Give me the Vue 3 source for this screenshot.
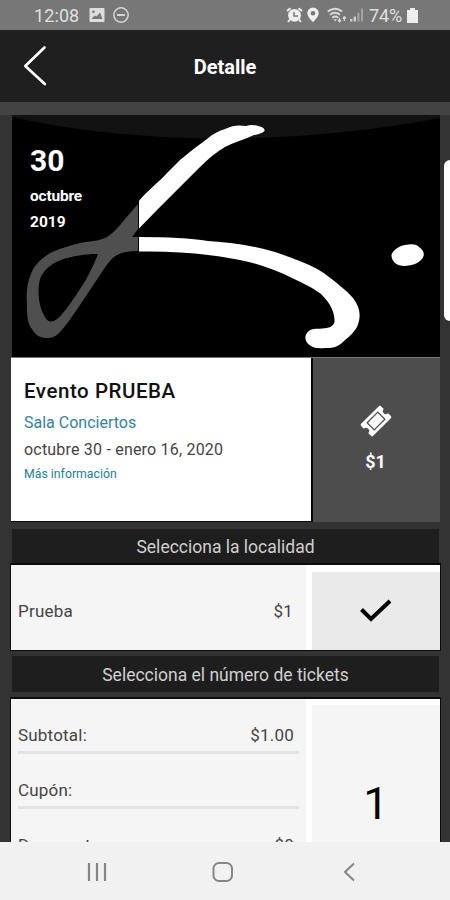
<script setup>
import { ref } from 'vue'

const event = {
  day: '30',
  month: 'octubre',
  year: '2019',
  name: 'Evento PRUEBA',
  venue: 'Sala Conciertos',
  dates: 'octubre 30 - enero 16, 2020',
  price: '$1',
}
const quantity = ref(1)
const lines = [
  { label: 'Subtotal:', value: '$1.00' },
  { label: 'Cupón:', value: '' },
  { label: 'Descuento:', value: '$0' },
]
</script>

<template>
  <div class="screen">
    <div class="status">
      <span class="clock">12:08</span>
      <svg class="status-picture" width="16" height="16" viewBox="0 0 16 16">
        <rect x="0.5" y="1" width="15" height="14" rx="1" fill="#dedede" />
        <path d="M2.500 12l3-3.500 2 1 3.500-4 2.500 6.500z" fill="#777" />
        <circle cx="4.500" cy="4.800" r="1.300" fill="#777" />
      </svg>
      <svg width="16" height="16" viewBox="0 0 16 16" fill="none" stroke="#d6d6d6" stroke-width="1.500">
        <circle cx="8" cy="8" r="7.200" />
        <path d="M4 8h8" stroke-width="2" />
      </svg>
      <span class="spacer"></span>
      <svg width="17" height="16" viewBox="0 0 17 16">
        <path d="M1 4l3.500-2.800M16 4l-3.500-2.800M4 12.500l-2 2.500M13 12.500l2 2.500" stroke="#eee" stroke-width="2" />
        <circle cx="8.500" cy="8.300" r="6.400" fill="#eee" />
        <path d="M8 5v4h4" fill="none" stroke="#777" stroke-width="1.500" />
      </svg>
      <svg class="status-pin" width="12" height="16" viewBox="0 0 12 16">
        <path fill-rule="evenodd" d="M6 .5a5.700 5.700 0 0 0-5.700 5.700c0 3.600 5.700 9 5.700 9s5.700-5.400 5.700-9A5.700 5.700 0 0 0 6 .5zm0 3.400a2.300 2.300 0 1 1 0 4.600 2.300 2.300 0 0 1 0-4.600z" fill="#eee" />
      </svg>
      <svg class="status-wifi" width="20" height="16" viewBox="0 0 20 16" fill="none" stroke="#dadada" stroke-width="1.800">
        <path d="M.8 4.500q7.200-5.500 14.400 0M3 7.700q5-4 10 0M5.300 10.700q3-2.400 5.800 0" />
        <path d="M6.500 12.300h3.500L8.200 14.500z" fill="#dadada" stroke="none" />
        <path d="M12.500 14.500v-3.500m-1.500 2l1.500 1.800L14 13M17.300 14v-4m-1.500 1.500l1.500-1.700 1.500 1.700" stroke-width="1.300" />
      </svg>
      <svg class="status-signal" width="15" height="16" viewBox="0 0 15 16">
        <path d="M1 12h2.400v2.500H1zM4.600 9.500H7v5H4.600z" fill="#ccc" />
        <path d="M8.300 6h2.200v8.500H8.300zM12 1.500h2v13h-2z" fill="#a3a3a3" />
      </svg>
      <span class="charge">74%</span>
      <svg width="11" height="15" viewBox="0 0 11 15">
        <path d="M3 0h5v2h3v13H0V2h3z" fill="#eee" />
      </svg>
    </div>

    <header class="header">
      <svg class="back" width="26" height="42" viewBox="0 0 26 42" fill="none" stroke="#fff" stroke-width="2.700" stroke-linecap="round" stroke-linejoin="round">
        <path d="M21.500 2.500L2.300 21l19.500 18" />
      </svg>
      <h1>Detalle</h1>
      <span class="back"></span>
    </header>

    <main class="content">
      <section class="hero">
        <svg class="artwork" width="428" height="242" viewBox="12 115 428 242">
          <path d="M12 115h428v3Q339 137 233 138.500 108 139 12 117z" fill="#121212" />
          <path fill="#4f4f4f" fill-rule="evenodd" d="M138 204L125 219Q115 232 107 237C100 241 91 241 80 243C68 246 59 249 50 253C41 259 34 265 31 274C27 283 26 293 27 304C27 315 27 323 32 329C36 336 41 338 47 338C53 338 56 336 60 332C68 323 73 315 80 305L100 275C106 266 110 259 117 255Q124 251 138 251V237H132L138 229zM98 254C87 254 71 256 61 260C50 264 43 271 40 279C38 287 38 296 40 305C42 312 46 321 50 321.500C57 322 62 314 67 308Q75 297 82 286Q90 274 98 254z" />
          <path fill="#fff" d="M139 201C147 191 158 183 167 173L180 160Q193 149 207 139C213 134 218 131 225 129C233 125 239 125 246 126Q252 124 258 126C263 127 265 129 264.500 131Q261 134 254 135C244 140 234 142 225 147Q213 154 200 167L180 187L157 210L139 228.500z" />
          <path fill="#fff" d="M139 237Q182 237 208 241Q244 243 275 252Q290 257 302 262Q318 268 329 277C338 284 346 290 353 298C361 308 361 318 357 327Q353 334 345 340C337 348 333 348 325 348Q315 349 311 346C305 343 304 337 307 333C310 328 317 329 322 328.500C329 328 333 327 334.500 322C335 311 329 302 321 294Q312 287 292 278Q274 269 251 262.500Q228 257 208 255Q180 251 139 251.500z" />
          <path fill="#fff" d="M391.500 256C391 252 398 246 405 245Q416 243 419 247C425 251 425 256 421 260Q417 265 405 266C396 266 392 261 391.500 256z" />
        </svg>
        <div class="date">
          <span class="day">{{ event.day }}</span>
          <span class="month">{{ event.month }}</span>
          <span class="year">{{ event.year }}</span>
        </div>
      </section>

      <section class="summary">
        <div class="info">
          <h2>{{ event.name }}</h2>
          <span class="venue">{{ event.venue }}</span>
          <span class="dates">{{ event.dates }}</span>
          <a class="more">Más información</a>
        </div>
        <div class="price">
          <svg width="34" height="34" viewBox="0 0 34 34">
            <g transform="rotate(-45 17 17)">
              <path d="M4.500 8.500H29.500Q31 8.500 31 10V14A3 3 0 0 0 31 20V24Q31 25.500 29.500 25.500H4.500Q3 25.500 3 24V20A3 3 0 0 0 3 14V10Q3 8.500 4.500 8.500z" fill="#fff" />
              <rect x="9.500" y="12" width="15" height="10" fill="#fff" stroke="#4d4d4d" stroke-width="1.300" />
            </g>
          </svg>
          <span>{{ event.price }}</span>
        </div>
      </section>

      <h3 class="bar">Selecciona la localidad</h3>

      <section class="panel location">
        <div class="cell location-info">
          <span>Prueba</span>
          <span>{{ event.price }}</span>
        </div>
        <div class="cell chosen">
          <svg width="34" height="26" viewBox="0 0 34 26" fill="none" stroke="#050505" stroke-width="4">
            <path d="M2.500 11.500l9.500 9.500L31 3" />
          </svg>
        </div>
      </section>

      <h3 class="bar tickets-title">Selecciona el número de tickets</h3>

      <section class="panel tickets">
        <div class="cell lines">
          <div v-for="line in lines" :key="line.label" class="line">
            <span>{{ line.label }}</span>
            <span>{{ line.value }}</span>
          </div>
        </div>
        <div class="cell quantity">{{ quantity }}</div>
      </section>
      <div class="edge-handle"></div>
    </main>

    <nav class="nav">
      <svg width="20" height="20" viewBox="0 0 20 20" stroke="#858585" stroke-width="2.200">
        <path d="M2 1v18M10 1v18M18 1v18" />
      </svg>
      <svg width="22" height="22" viewBox="0 0 22 22" fill="none" stroke="#858585" stroke-width="2">
        <rect x="1.500" y="2" width="18.500" height="18" rx="5.500" />
      </svg>
      <svg width="14" height="20" viewBox="0 0 14 20" fill="none" stroke="#858585" stroke-width="2">
        <path d="M12 1.500L3 10l9 8.500" />
      </svg>
    </nav>
  </div>
</template>

<style>
body {
  margin: 0;
}
</style>

<style scoped>
.screen {
  display: flex;
  flex-direction: column;
  width: 450px;
  height: 900px;
  overflow: hidden;
  background: #333;
  font-family: Roboto, sans-serif;
}
svg {
  display: block;
  flex: none;
}
h1,
h2,
h3 {
  margin: 0;
}
.status {
  display: flex;
  align-items: center;
  flex: none;
  height: 30px;
  box-sizing: border-box;
  padding: 0 32px 0 34px;
  background: #777;
  color: #e0e0e0;
  font-size: 18px;
}
.clock {
  width: 55px;
  letter-spacing: 0.1px;
}
.status-picture {
  margin-right: 8px;
}
.spacer {
  flex: 1;
}
.status-pin {
  margin: 0 8px 0 4px;
}
.status-signal {
  margin: 0 5px 0 2px;
}
.charge {
  width: 38px;
  font-size: 18px;
  letter-spacing: -0.1px;
}
.header {
  display: flex;
  align-items: center;
  justify-content: space-between;
  flex: none;
  height: 72px;
  box-sizing: border-box;
  padding: 0 23px;
  background: #1f1f1f;
  color: #fff;
}
.back {
  width: 26px;
}
.header h1 {
  font-size: 20px;
  font-weight: 700;
  padding-top: 1px;
}
.content {
  position: relative;
  flex: 1;
  min-height: 0;
  overflow: hidden;
  border-top: 13px solid #434343;
  padding: 0 10px 0 12px;
}
.hero {
  position: relative;
  height: 242px;
  background: #000;
}
.date {
  position: absolute;
  left: 18px;
  top: 27px;
  display: flex;
  flex-direction: column;
  color: #fff;
  font-weight: 700;
}
.day {
  font-size: 30px;
  line-height: 38px;
}
.month {
  margin-top: 3px;
  font-size: 15.500px;
  line-height: 26px;
  letter-spacing: -0.2px;
}
.year {
  font-size: 15.500px;
  line-height: 26px;
}
.summary {
  display: flex;
  height: 164px;
  margin-left: -1px;
  border-top: 1px solid #777;
}
.info {
  display: flex;
  flex-direction: column;
  flex: none;
  width: 302px;
  box-sizing: border-box;
  padding: 19px 13px;
  background: #fff;
  border-right: 2px solid #080808;
  border-bottom: 1px solid #080808;
  color: #444;
}
.info h2 {
  font-size: 20.500px;
  font-weight: 500;
  letter-spacing: 0.55px;
  line-height: 28px;
  color: #111;
}
.venue {
  margin-top: 4px;
  font-size: 16px;
  line-height: 27px;
  color: #33829b;
}
.dates {
  font-size: 16px;
  line-height: 27px;
  letter-spacing: 0.2px;
}
.more {
  font-size: 12.300px;
  line-height: 23px;
  color: #238097;
}
.price {
  display: flex;
  flex: 1;
  flex-direction: column;
  align-items: center;
  gap: 13px;
  box-sizing: border-box;
  padding: 46px 2px 0 0;
  background: #4d4d4d;
  color: #fff;
  font-size: 18px;
  font-weight: 700;
}
.bar {
  height: 34px;
  margin: 7px 1px 0 0;
  background: #1e1e1e;
  color: #d0d0d0;
  font-size: 17.500px;
  font-weight: 400;
  line-height: 37px;
  text-align: center;
}
.panel {
  display: flex;
  gap: 6px;
  margin: 0 -1px 0 -2px;
  border: 1px solid #0b0b0b;
  border-top-width: 2px;
  box-sizing: border-box;
  background: #fff;
  color: #444;
}
.location {
  height: 88px;
}
.cell {
  box-sizing: border-box;
  background: #f5f5f5;
}
.location-info {
  display: flex;
  align-items: center;
  justify-content: space-between;
  width: 295px;
  padding: 7px 13px 0 7px;
  font-size: 17px;
  letter-spacing: 0.2px;
}
.chosen {
  display: flex;
  flex: 1;
  justify-content: center;
  margin-top: 7px;
  padding-top: 26px;
  background: #eaeaea;
}
.tickets-title {
  height: 36px;
  margin-top: 5px;
  line-height: 38px;
}
.tickets {
  height: 180px;
  margin-top: 5px;
}
.lines {
  width: 295px;
  padding: 0 7px;
  font-size: 17px;
  letter-spacing: 0.2px;
}
.line {
  display: flex;
  justify-content: space-between;
  align-items: flex-end;
  height: 55px;
  box-sizing: border-box;
  padding: 0 5px 6px 0;
  border-bottom: 3px solid #e3e3e3;
  line-height: 20px;
}
.quantity {
  flex: 1;
  margin-top: 6px;
  padding: 69px 0 0;
  color: #050505;
  font-size: 45px;
  line-height: 60px;
  text-align: center;
}
.edge-handle {
  position: absolute;
  top: 45px;
  right: -6px;
  width: 12px;
  height: 161px;
  border-radius: 6px;
  background: #fff;
}
.nav {
  display: flex;
  align-items: center;
  justify-content: space-between;
  flex: none;
  height: 58px;
  box-sizing: border-box;
  padding: 2px 94px 0 87px;
  background: #f1f1f1;
}
.nav svg:nth-child(2) {
  margin-right: 3px;
}
</style>
